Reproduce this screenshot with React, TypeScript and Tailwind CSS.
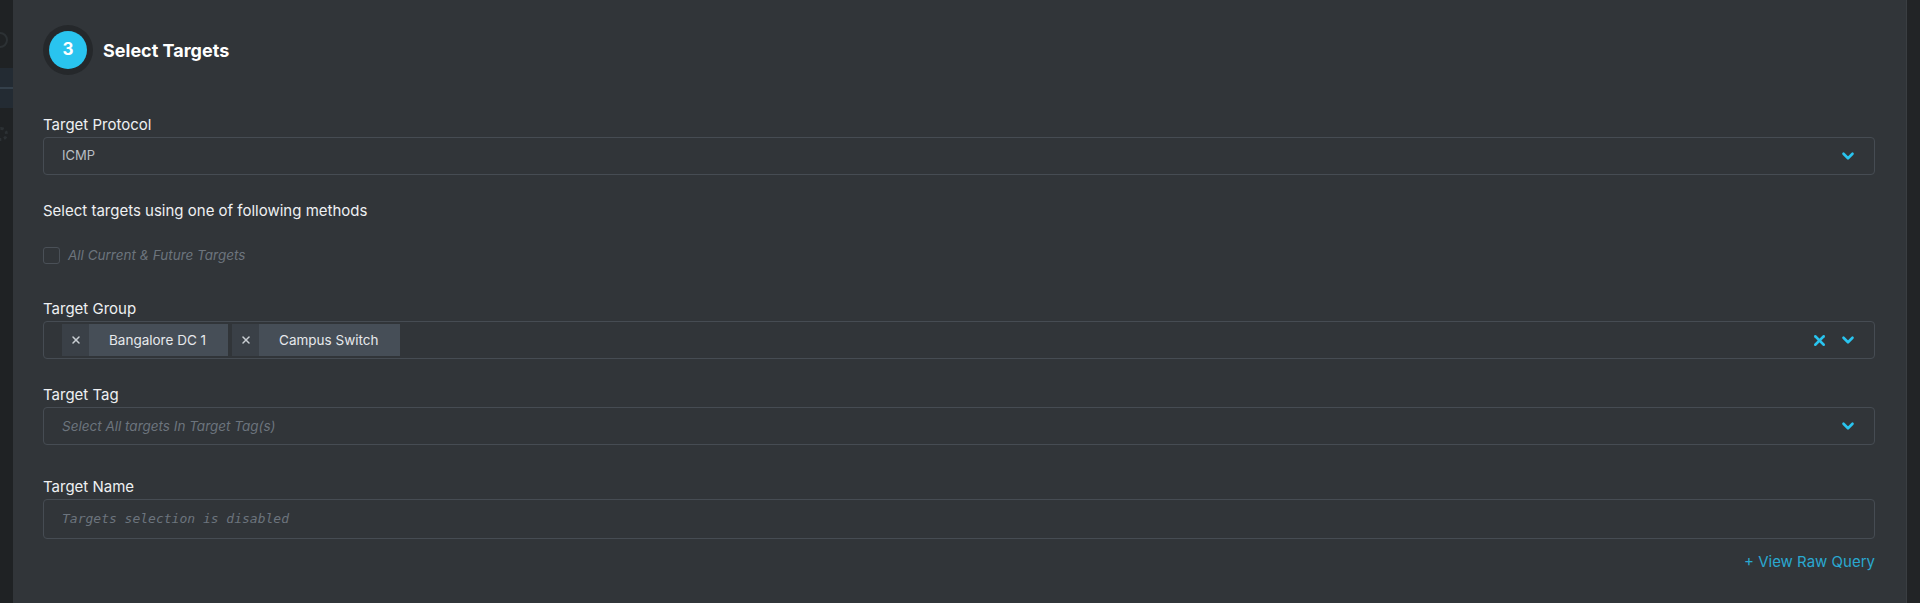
import { ChevronDown, X } from 'lucide-react';

const font = { fontFamily: 'Inter, "Noto Sans", sans-serif' };

function Label({ children, className = '' }: { children: string; className?: string }) {
  return <div className={`text-[15px] leading-5 text-[#eef0f2] ${className}`}>{children}</div>;
}

function Chip({ text }: { text: string }) {
  return (
    <div className="flex h-8 items-stretch">
      <div className="flex w-[27px] items-center justify-center bg-[#3a4047] text-[#c9ced3]">
        <X className="h-3 w-3" strokeWidth={3} />
      </div>
      <div className="flex items-center bg-[#464e57] pl-5 pr-[22px] text-[13.5px] text-[#e6e9ec]">{text}</div>
    </div>
  );
}

function Chevron() {
  return <ChevronDown className="h-[18px] w-[18px] text-[#29c4ef]" strokeWidth={3.5} />;
}

export default function App() {
  return (
    <div className="flex h-[603px] w-full overflow-hidden" style={font}>
      <aside className="flex w-[13px] shrink-0 flex-col bg-[#1f2224]">
        <div className="mt-[32px] ml-[-8px] h-[16px] w-[16px] rounded-full border-2 border-[#2c3134]" />
        <div className="mt-[20px] flex h-[40px] items-center bg-[#232b33]">
          <div className="h-[2px] w-full bg-[#34404b]" />
        </div>
        <div className="mt-[19px] ml-[-6px] h-[14px] w-[14px] rounded-full border-[3px] border-dotted border-[#2c3134]" />
      </aside>

      <main className="flex-1 bg-[#313539] pt-[25px] pl-[30px] pr-[31px]">
        <div className="flex items-center gap-[10px]">
          <div className="flex h-[50px] w-[50px] items-center justify-center rounded-full bg-[#25282b]">
            <div className="flex h-[38px] w-[38px] items-center justify-center rounded-full bg-[#29c4ef] text-[17px] font-bold text-white">
              3
            </div>
          </div>
          <h2 className="text-[18px] font-bold text-white">Select Targets</h2>
        </div>

        <Label className="mt-[40px]">Target Protocol</Label>
        <div className="mt-[2px] flex h-[38px] items-center justify-between rounded-[4px] border border-[#464c53] pl-[18px] pr-[17px]">
          <span className="text-[13px] text-[#b9bec3]">ICMP</span>
          <Chevron />
        </div>

        <Label className="mt-[26px]">Select targets using one of following methods</Label>

        <div className="mt-[26px] flex items-center gap-[8px]">
          <div className="h-[17px] w-[17px] rounded-[3px] border border-[#4a5057]" />
          <span className="text-[13.5px] leading-[17px] italic text-[#6c747d]">All Current &amp; Future Targets</span>
        </div>

        <Label className="mt-[35px]">Target Group</Label>
        <div className="mt-[2px] flex h-[38px] items-center justify-between rounded-[4px] border border-[#464c53] pl-[18px] pr-[17px]">
          <div className="flex gap-1">
            <Chip text="Bangalore DC 1" />
            <Chip text="Campus Switch" />
          </div>
          <div className="flex items-center gap-[11px]">
            <X className="h-[17px] w-[17px] text-[#29c4ef]" strokeWidth={3.5} />
            <Chevron />
          </div>
        </div>

        <Label className="mt-[26px]">Target Tag</Label>
        <div className="mt-[2px] flex h-[38px] items-center justify-between rounded-[4px] border border-[#464c53] pl-[18px] pr-[17px]">
          <span className="text-[13.5px] italic text-[#6c747d]">Select All targets In Target Tag(s)</span>
          <Chevron />
        </div>

        <Label className="mt-[32px]">Target Name</Label>
        <div className="mt-[2px] flex h-[40px] items-center rounded-[4px] border border-[#464c53] pl-[18px]">
          <span className="text-[13px] italic text-[#6c747d]" style={{ fontFamily: '"DejaVu Sans Mono", monospace' }}>
            Targets selection is disabled
          </span>
        </div>

        <div className="mt-[12px] flex justify-end">
          <span className="text-[15px] text-[#2aa8d0]">+ View Raw Query</span>
        </div>
      </main>

      <aside className="w-[14px] shrink-0 border-l border-[#3a3e42] bg-[#222426]" />
    </div>
  );
}
